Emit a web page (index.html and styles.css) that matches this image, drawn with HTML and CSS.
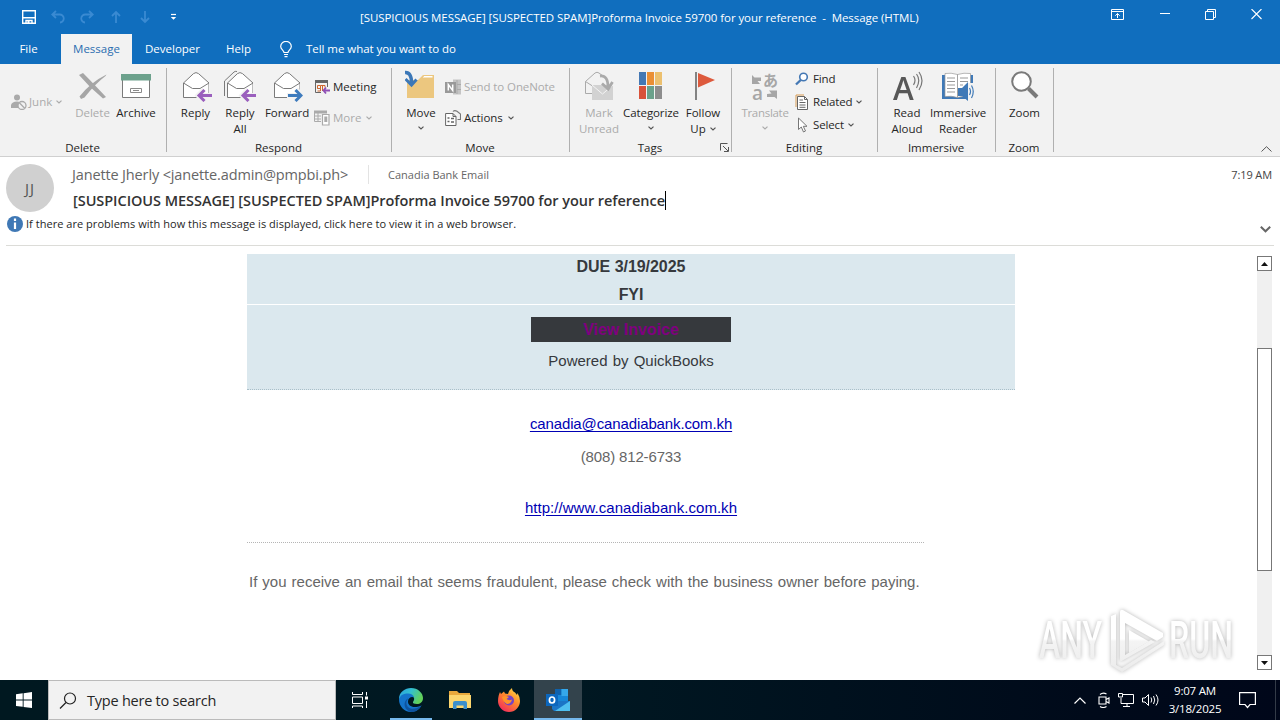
FILE: index.html
```html
<!DOCTYPE html>
<html lang="en">

<head>
  <meta charset="UTF-8">
  <meta name="viewport" content="width=device-width, initial-scale=1.0">
  <title>Message (HTML)</title>
  <link rel="stylesheet" href="styles.css">
</head>

<body>
  <svg class="defs" width="0" height="0">
    <symbol id="chev" viewBox="0 0 6 4"><path d="M.5.6 3 3 5.5.6" fill="none" stroke="currentColor" stroke-width="1.2"/></symbol>
    <symbol id="envelope" viewBox="0 0 26 27">
      <path d="M.5 11 L10.5 1.6 Q13 -.4 15.500 1.600 L26 11 V25.500 H.5z" fill="#fff" stroke="#7a7a7a"/>
      <path d="M.5 11 9.500 16.500 H17 L26 11" fill="none" stroke="#7a7a7a"/>
    </symbol>
  </svg>

  <!-- title bar -->
  <div class="titlebar">
    <div class="quick">
      <svg width="14" height="14" viewBox="0 0 14 14"><path d="M.7.700H13.300V13.300H.7zM1 7.800H13M4 13V10.500H10V13" fill="none" stroke="#fff" stroke-width="1.400"/><path d="M5.500 11h2v2h-2z" fill="#fff"/></svg>
      <svg class="faded" width="14" height="14" viewBox="0 0 14 14"><path d="M5 1 1.200 4.500 5 8M1.500 4.500H8.500A4 4 0 0 1 9 12.500" fill="none" stroke="currentColor" stroke-width="1.800"/></svg>
      <svg class="faded" width="14" height="14" viewBox="0 0 14 14"><path d="M9 1 12.800 4.500 9 8M12.500 4.500H5.500A4 4 0 0 0 5 12.500" fill="none" stroke="currentColor" stroke-width="1.800"/></svg>
      <svg class="faded" width="14" height="14" viewBox="0 0 14 14"><path d="M7 13V2M3 6 7 2 11 6" fill="none" stroke="currentColor" stroke-width="1.800"/></svg>
      <svg class="faded" width="14" height="14" viewBox="0 0 14 14"><path d="M7 1V12M3 8 7 12 11 8" fill="none" stroke="currentColor" stroke-width="1.800"/></svg>
      <svg width="14" height="14" viewBox="0 0 14 14"><path d="M4 4.500H9" stroke="#fff" stroke-width="1.200"/><path d="M3.800 7H9.200L6.500 9.700z" fill="#fff"/></svg>
    </div>
    <div class="window-title">[SUSPICIOUS MESSAGE] [SUSPECTED SPAM]Proforma Invoice 59700 for your reference&nbsp; -&nbsp; Message (HTML)</div>
    <div class="window-buttons">
      <svg width="14" height="12" viewBox="0 0 14 12"><path d="M.5.500H12.500V10.500H.5zM.5 2.500H12.500M6.500 9V4.500M4.300 6.700 6.500 4.500 8.700 6.700" fill="none" stroke="#fff"/></svg>
      <svg width="10" height="12" viewBox="0 0 10 12"><path d="M0 4.500H10" stroke="#fff"/></svg>
      <svg width="11" height="12" viewBox="0 0 11 12"><path d="M.5 2.500H8.500V10.500H.5zM2.500 2V.5H10.500V8.500H9" fill="none" stroke="#fff"/></svg>
      <svg width="11" height="12" viewBox="0 0 11 12"><path d="M.5 0 10.500 10M10.500 0 .5 10" stroke="#fff" stroke-width="1.100"/></svg>
    </div>
  </div>

  <div class="tabs">
    <div class="tab tab-file">File</div>
    <div class="tab active">Message</div>
    <div class="tab tab-dev">Developer</div>
    <div class="tab tab-help">Help</div>
    <svg class="bulb" width="12" height="17" viewBox="0 0 12 17"><path d="M4 11.500C4 9.500.7 8.500.7 5.500A5.200 5 0 0 1 11.300 5.500C11.300 8.500 8 9.500 8 11.500zM4 13.500H8M4.500 15.700H7.500" fill="none" stroke="#fff" stroke-width="1.200"/></svg>
    <div class="tell-me">Tell me what you want to do</div>
  </div>

  <!-- ribbon -->
  <div class="ribbon">
    <div class="group group-delete">
      <div class="tools">
        <div class="small-col one">
          <div class="small disabled">
            <svg width="16" height="16" viewBox="0 0 16 16"><circle cx="6" cy="3.500" r="3" fill="#aaa"/><path d="M0 14V11Q1 7.500 6 7.500 8 7.500 9 8.500L7 14z" fill="#aaa"/><circle cx="11" cy="11.500" r="4" fill="#f2f2f2" stroke="#aaa" stroke-width="1.300"/><path d="M8.300 8.800 13.700 14.200" stroke="#aaa" stroke-width="1.300"/></svg>
            <span>Junk</span><svg class="chev" width="6" height="4"><use href="#chev"/></svg>
          </div>
        </div>
        <div class="big disabled btn-delete">
          <svg width="30" height="32" viewBox="0 0 30 32"><path d="M1 5 5 3Q13 11 28 27L25 28.500Q12 18 1 5zM28.500 4.500 27.500 6Q17 14 6.500 27.500L3 29 1.500 26.500Q13 12 28.500 4.500z" fill="#a6a6a6"/></svg>
          <span>Delete</span>
        </div>
        <div class="big btn-archive">
          <svg width="30" height="32" viewBox="0 0 30 32"><path d="M1.500 9V27.500H28.500V9" fill="#fff" stroke="#7a7a7a"/><path d="M0 4H30V10.500H0z" fill="#6ca18c"/><path d="M9.500 18.500H20.500V22.500H9.500zM12 20.500H18" fill="none" stroke="#8a8a8a"/></svg>
          <span>Archive</span>
        </div>
      </div>
      <div class="group-name">Delete</div>
    </div>

    <div class="group group-respond">
      <div class="tools">
        <div class="big btn-reply">
          <svg width="32" height="32" viewBox="0 0 32 32"><use href="#envelope" x="3" y="2" width="26" height="27"/><path d="M32 25.500H18M24 19.500 18 25.500 24 31.500" fill="none" stroke="#f2f2f2" stroke-width="5"/><path d="M32 25.500H19M24.500 20 19 25.500 24.500 31" fill="none" stroke="#9a5fbd" stroke-width="3"/></svg>
          <span>Reply</span>
        </div>
        <div class="big btn-replyall">
          <svg width="34" height="32" viewBox="0 0 34 32"><path d="M1.500 26V11L11 2Q12 1 14 1.500" fill="none" stroke="#7a7a7a"/><use href="#envelope" x="4" y="2" width="26" height="27"/><path d="M34 25.500H19M25 19.500 19 25.500 25 31.500" fill="none" stroke="#f2f2f2" stroke-width="5"/><path d="M33 25.500H20M25.500 20 20 25.500 25.500 31" fill="none" stroke="#9a5fbd" stroke-width="3"/></svg>
          <span>Reply</span><span>All</span>
        </div>
        <div class="big btn-forward">
          <svg width="32" height="32" viewBox="0 0 32 32"><use href="#envelope" x="3" y="2" width="26" height="27"/><path d="M16 25.500H31M25 19.500 31 25.500 25 31.500" fill="none" stroke="#f2f2f2" stroke-width="5"/><path d="M17 25.500H30M24.500 20 30 25.500 24.500 31" fill="none" stroke="#3e7bbd" stroke-width="3"/></svg>
          <span>Forward</span>
        </div>
        <div class="small-col two">
          <div class="small">
            <svg width="16" height="16" viewBox="0 0 16 16"><path d="M1.500 2V13.500H7M13.500 4V8" fill="none" stroke="#666"/><path d="M1 1H14V4H1z" fill="#666"/><path d="M3.500 6.500H6.500V9.500H3.500zM3.500 9.500H6.500V12H3.500M6.500 6.500H11V8.500M8.500 6.500V12" fill="none" stroke="#d0672d"/><path d="M16 11.500H9.500M12 8.500 9.500 11.500 12 14.500" fill="none" stroke="#8f4fb5" stroke-width="1.800"/></svg>
            <span>Meeting</span>
          </div>
          <div class="small disabled">
            <svg width="16" height="16" viewBox="0 0 16 16"><path d="M.5 3V11.500H7M.5 6H7M.5 9H7M4 3V11" fill="none" stroke="#aaa"/><path d="M0 .500H13V3.500H0z" fill="#aaa"/><path d="M8.500 4.500H15V15H8.500z" fill="#fff" stroke="#aaa" stroke-width="1.200"/><path d="M10.300 6.500H13.300V12H10.300z" fill="#aaa"/></svg>
            <span>More</span><svg class="chev" width="6" height="4"><use href="#chev"/></svg>
          </div>
        </div>
      </div>
      <div class="group-name">Respond</div>
    </div>

    <div class="group group-move">
      <div class="tools">
        <div class="big btn-move">
          <svg width="32" height="32" viewBox="0 0 32 32"><path d="M2 28V10H13L18 5H29V28z" fill="#ecc77f"/><path d="M17 8 19 5.500H28V8z" fill="#fff" stroke="#ecc77f"/><path d="M0 2.500Q6.500 2 6.500 13" fill="none" stroke="#3c78b8" stroke-width="3.500"/><path d="M.5 9 6.500 15 11.500 9.500" fill="none" stroke="#3c78b8" stroke-width="3"/></svg>
          <span>Move</span><svg class="chev low" width="6" height="4"><use href="#chev"/></svg>
        </div>
        <div class="small-col two">
          <div class="small disabled">
            <svg width="16" height="16" viewBox="0 0 16 16"><path d="M8 .5H16V15.500H8z" fill="#c4c4c4"/><path d="M12 1V15M12 5.500H16M12 10.500H16" stroke="#aaa"/><path d="M0 3H11V14H0z" fill="#999"/><path d="M3.300 11.500V5.500L7.700 11.500V5.500" fill="none" stroke="#fff" stroke-width="1.500"/></svg>
            <span>Send to OneNote</span>
          </div>
          <div class="small">
            <svg width="16" height="16" viewBox="0 0 16 16"><path d="M.6 3.500H8L11 6.500V15.500H.6zM8 3.500V6.500H11" fill="#fff" stroke="#666"/><path d="M2.500 8H4.500M2.500 11.500H4.500M6 8.500H9M6 12H9" stroke="#666" stroke-width="1.300"/><path d="M8 1.500Q9.500-.2 12 1.200L15.500 4V9.500H12.500" fill="none" stroke="#777" stroke-width="1.100"/></svg>
            <span>Actions</span><svg class="chev" width="6" height="4"><use href="#chev"/></svg>
          </div>
        </div>
      </div>
      <div class="group-name">Move</div>
    </div>

    <div class="group group-tags">
      <div class="tools">
        <div class="big disabled btn-unread">
          <svg width="32" height="32" viewBox="0 0 32 32"><path d="M2.500 23.500V11.500L12 3Q14 1.500 16 3L20 6M2.500 11.500 9.500 16M2.500 23.500H9" fill="none" stroke="#aaa"/><path d="M9 15H30V30H9z" fill="#d2d2d2"/><path d="M9 15 19.500 24 30 15" fill="none" stroke="#f5f5f5"/><path d="M17 6Q25 5 25 17M19 13.500 25.200 19 29.500 12" fill="none" stroke="#aaa" stroke-width="2.800"/></svg>
          <span>Mark</span><span>Unread</span>
        </div>
        <div class="big btn-categorize">
          <svg class="cats" width="24" height="32" viewBox="0 0 24 32"><path d="M0 2H7V15H0z" fill="#4478b4"/><path d="M8 2H15V15H8z" fill="#ea8f35"/><path d="M16 2H23V15H16z" fill="#ecc06f"/><path d="M0 16H7V29H0z" fill="#d9523a"/><path d="M8 16H15V29H8z" fill="#6ba18b"/><path d="M16 16H23V29H16z" fill="#8d8d8d"/></svg>
          <span>Categorize</span><svg class="chev low" width="6" height="4"><use href="#chev"/></svg>
        </div>
        <div class="big btn-follow">
          <svg width="24" height="32" viewBox="0 0 24 32"><path d="M5 2V30" stroke="#777" stroke-width="1.800"/><path d="M7 3 24 10 7 17.500z" fill="#dd5a3d"/></svg>
          <span>Follow</span><span>Up <svg class="chev inline" width="6" height="4"><use href="#chev"/></svg></span>
        </div>
      </div>
      <div class="group-name">Tags</div>
      <svg class="launcher" width="9" height="9" viewBox="0 0 9 9"><path d="M.5 7.500V.5H7.500M3 3 8 8M8.500 4V8.500H4" fill="none" stroke="#555"/></svg>
    </div>

    <div class="group group-editing">
      <div class="tools">
        <div class="big disabled btn-translate">
          <div class="translate-icon">
            <svg width="28" height="32" viewBox="0 0 28 32"><path d="M1 5 3.500 7.500H10V11H6.500L9 14H1z" fill="#a6a6a6"/><path d="M26 29V20.500H18L20.500 23.500 16 24V27H23.500z" fill="#a6a6a6"/></svg>
            <b class="kana">あ</b><b class="latin">a</b>
          </div>
          <span>Translate</span><svg class="chev low" width="6" height="4"><use href="#chev"/></svg>
        </div>
        <div class="small-col three">
          <div class="small">
            <svg width="14" height="14" viewBox="0 0 14 14"><circle cx="8.500" cy="5" r="3.800" fill="#fff" stroke="#4478b4" stroke-width="1.600"/><path d="M5.700 8 1 12.500" stroke="#4478b4" stroke-width="2.400"/></svg>
            <span>Find</span>
          </div>
          <div class="small">
            <svg width="14" height="16" viewBox="0 0 14 16"><path d="M1 13V1H9" fill="none" stroke="#d89c54"/><path d="M2.500 2.500H9.500L12.500 5.500V15.500H2.500z" fill="#fff" stroke="#666"/><path d="M4.500 6H8M4.500 8.500H10.500M4.500 11H10.500M4.500 13.300H10.500M9.500 2.500V5.500H12.500" fill="none" stroke="#666"/></svg>
            <span>Related</span><svg class="chev" width="6" height="4"><use href="#chev"/></svg>
          </div>
          <div class="small">
            <svg width="14" height="16" viewBox="0 0 14 16"><path d="M3.500 1V12.500L6.300 10 8.500 15 10.500 14 8.300 9.300H12z" fill="#fff" stroke="#777"/></svg>
            <span>Select</span><svg class="chev" width="6" height="4"><use href="#chev"/></svg>
          </div>
        </div>
      </div>
      <div class="group-name">Editing</div>
    </div>

    <div class="group group-immersive">
      <div class="tools">
        <div class="big btn-read">
          <div class="read-icon">
            <b>A</b>
            <svg width="12" height="24" viewBox="0 0 12 24"><path d="M.5 6Q3.500 10 .5 15M3.500 4Q8 10 3.500 18M6 2Q12 10.500 6 20" fill="none" stroke="#777" stroke-width="1.200"/></svg>
          </div>
          <span>Read</span><span>Aloud</span>
        </div>
        <div class="big btn-immersive">
          <svg width="34" height="32" viewBox="0 0 34 32"><path d="M1 5H32V29H1z" fill="#3f79b7"/><path d="M4 3.500Q10 2.500 16.500 4.500V27.500Q10 25.500 4 26.500zM16.500 4.500Q23 2.500 29.500 3.500V26.500Q23 25.500 16.500 27.500z" fill="#fff" stroke="#999" stroke-width=".7"/><path d="M6 8H14M6 11.500H14M6 15H14M6 18.500H14M6 22H14M19 8H27M19 11.500H27M19 15H22" stroke="#999"/><path d="M27 13H34V31H27z" fill="#f2f2f2"/><path d="M17 18H21L27 12V31L21 26H17z" fill="#3f79b7"/><path d="M28.500 18Q30.500 21.500 28.500 25M30.500 15.500Q34 21.500 30.500 28" fill="none" stroke="#3f79b7" stroke-width="1.200"/></svg>
          <span>Immersive</span><span>Reader</span>
        </div>
      </div>
      <div class="group-name">Immersive</div>
    </div>

    <div class="group group-zoom">
      <div class="tools">
        <div class="big btn-zoom">
          <svg width="30" height="32" viewBox="0 0 30 32"><circle cx="11.500" cy="11.500" r="9.300" fill="#fff" stroke="#7a7a7a" stroke-width="2"/><path d="M18.500 18.500 27 27" stroke="#7a7a7a" stroke-width="4"/></svg>
          <span>Zoom</span>
        </div>
      </div>
      <div class="group-name">Zoom</div>
    </div>
    <svg class="collapse" width="11" height="6" viewBox="0 0 11 6"><path d="M.5 5.500 5.500.7 10.500 5.500" fill="none" stroke="#555"/></svg>
  </div>

  <!-- message header -->
  <div class="header">
    <div class="avatar">JJ</div>
    <div class="header-text">
      <div class="from-row">
        <span class="from">Janette Jherly &lt;janette.admin@pmpbi.ph&gt;</span>
        <span class="to">Canadia Bank Email</span>
        <span class="time">7:19 AM</span>
      </div>
      <div class="subject"><span>[SUSPICIOUS MESSAGE] [SUSPECTED SPAM]Proforma Invoice 59700 for your reference</span></div>
    </div>
  </div>
  <div class="infobar">
    <svg width="16" height="16" viewBox="0 0 16 16"><circle cx="8" cy="8" r="8" fill="#3f78b5"/><path d="M8 2.500V5M8 6.500V13" stroke="#fff" stroke-width="2.200"/></svg>
    <span class="info-text">If there are problems with how this message is displayed, click here to view it in a web browser.</span>
    <svg class="expand" width="11" height="7" viewBox="0 0 11 7"><path d="M.8.800 5.500 5.300 10.200.8" fill="none" stroke="#666" stroke-width="2"/></svg>
  </div>

  <!-- mail body -->
  <div class="content">
    <div class="mail">
      <div class="panel">
        <div class="due">DUE 3/19/2025</div>
        <div class="fyi">FYI</div>
        <div class="panel-bottom">
          <a class="invoice">View Invoice</a>
          <div class="powered">Powered by QuickBooks</div>
        </div>
      </div>
      <div class="line email"><a>canadia@canadiabank.com.kh</a></div>
      <div class="line phone">(808) 812-6733</div>
      <div class="line site"><a>http://www.canadiabank.com.kh</a></div>
      <div class="notice"><span>If you receive an email that seems fraudulent, please check with the business owner before paying.</span></div>
    </div>
    <div class="scrollbar">
      <div class="arrow"><svg width="7" height="4" viewBox="0 0 7 4"><path d="M0 4 3.500 0 7 4z" fill="#111"/></svg></div>
      <div class="thumb"></div>
      <div class="arrow down"><svg width="7" height="4" viewBox="0 0 7 4"><path d="M0 0H7L3.500 4z" fill="#111"/></svg></div>
    </div>
    <svg class="watermark" width="210" height="80" viewBox="0 0 210 80">
      <defs><linearGradient id="wm" gradientUnits="userSpaceOnUse" x1="0" y1="8" x2="0" y2="68"><stop offset=".48" stop-color="#fff"/><stop offset=".52" stop-color="#f4f4f4"/><stop offset="1" stop-color="#ececec"/></linearGradient></defs>
      <g class="mark" fill="url(#wm)">
        <text x="9" y="56" textLength="63" lengthAdjust="spacingAndGlyphs">ANY</text>
        <text x="139" y="56" textLength="64" lengthAdjust="spacingAndGlyphs">RUN</text>
        <path d="M90 10Q90 7 93 8L133 31V35L127 39 95 21V53L121 38 125 40 90 60zM81 14 86 12V63L92 66 134 39V43L92 70 81 63z"/>
        <path d="M99 28 119 39.500 99 51z"/>
      </g>
    </svg>
  </div>

  <!-- taskbar -->
  <div class="taskbar">
    <div class="start"><svg width="16" height="16" viewBox="0 0 16 16"><path d="M0 2.200 6.700 1.300V7.600H0zM7.600 1.200 16 0V7.600H7.600zM0 8.500H6.700V14.800L0 13.900zM7.600 8.500H16V16L7.600 14.900z" fill="#fff"/></svg></div>
    <div class="search">
      <svg width="18" height="17" viewBox="0 0 18 17"><circle cx="11" cy="6.500" r="5.500" fill="none" stroke="#222" stroke-width="1.200"/><path d="M7 10.500 1 16.500" stroke="#222" stroke-width="1.300"/></svg>
      <span>Type here to search</span>
    </div>
    <div class="task"><svg width="16" height="16" viewBox="0 0 16 16"><path d="M.5 0V2.500H10.500V0M.5 5H10.500V11.500H.5zM.5 16V14H10.500V16M14.500 0V3.500M14.500 9V16" fill="none" stroke="#fff"/><path d="M13 4.500H16V7.500H13z" fill="#fff"/></svg></div>
    <div class="task edge">
      <svg width="24" height="24" viewBox="0 0 24 24">
        <defs><linearGradient id="eg" x1="0" y1="0" x2="1" y2=".4"><stop offset="0" stop-color="#2a9fe0"/><stop offset=".5" stop-color="#33bfd0"/><stop offset="1" stop-color="#62d05a"/></linearGradient></defs>
        <path d="M0 11C0 4 6 0 12 0 19 0 24 5 24 10 24 14 21 16 18 16 15 16 13.500 15 14 14Q16 11 14.500 9L9 7z" fill="url(#eg)"/>
        <path d="M0 11.500C1 7 5 5.500 9 5.500 12 5.500 14.500 7 15 9.500 13 8 9 9.500 9 13.500 9 18 14 21 22.500 17.500 20 22 16 24 12 24 5 24 0 18 0 11.500z" fill="#1474cb"/>
        <path d="M9.500 10.500C6 13 7 19 11.500 20.500 15 21.500 19 20 22.500 17.500 20 22 16 24 12.500 24 7 23 4.500 18 6 14 7 11.500 8 10.700 9.500 10.500z" fill="#0e539f"/>
      </svg>
    </div>
    <div class="task"><svg width="22" height="18" viewBox="0 0 22 18"><path d="M0 0H8L10 2H21V17H0z" fill="#e9a93c"/><path d="M0 4H22V17H0z" fill="#fcd66e"/><path d="M4 18V12Q4 10 6 10H16Q18 10 18 12V18H14.500V14.500H7.500V18z" fill="#3b8fcb"/></svg></div>
    <div class="task"><svg width="24" height="24" viewBox="0 0 24 24">
      <defs><linearGradient id="fx" x1=".9" y1="0" x2=".2" y2="1"><stop offset="0" stop-color="#ffe14a"/><stop offset=".45" stop-color="#ff8a2b"/><stop offset="1" stop-color="#f1275f"/></linearGradient></defs>
      <path d="M1 13C1 9 2 6 3 4L4 6 7 3.500 8 5.500 11 6Q12 2 15 0 15 3 18 4.500L20 7 20.500 5Q23 9 23 13A11 11 0 0 1 1 13z" fill="url(#fx)"/><circle cx="12" cy="12.500" r="5" fill="#7542c5"/><path d="M5 9Q8 7 12 9L9.500 11Q12 13 15 11.500 14 16 10 16 6 14 5 9z" fill="#ff9428"/></svg></div>
    <div class="task current"><svg width="24" height="22" viewBox="0 0 24 22"><path d="M9 0H22V13H9z" fill="#1687d8"/><path d="M9 0H15.500V6H9z" fill="#0f62ad"/><path d="M15.500 0H22V7H15.500z" fill="#35a8ea"/><path d="M6 12H24V22H8L6 20z" fill="#1a75c6"/><path d="M24 12V22H9z" fill="#4fc0f0"/><path d="M0 5H12V17H0z" fill="#0c67bd"/><ellipse cx="6" cy="11" rx="2.600" ry="3" fill="none" stroke="#fff" stroke-width="1.700"/></svg></div>
    <div class="tray">
      <svg class="caret" width="12" height="7" viewBox="0 0 12 7"><path d="M.5 6.500 6 1 11.500 6.500" fill="none" stroke="#fff" stroke-width="1.200"/></svg>
      <svg width="12" height="16" viewBox="0 0 12 16"><path d="M1 5H8V12H1zM8 7.500 11 6V11L8 9.500M2 2.500Q5 0 8.500 2M2 14.500Q5 16.500 8.500 14.500" fill="none" stroke="#fff" stroke-width="1.100"/></svg>
      <svg width="16" height="14" viewBox="0 0 16 14"><path d="M5 1.500H15.500V10.500H3V5M9 11V13M5 13.500H12" fill="none" stroke="#fff"/><path d="M.5.500H4.500V4H.5z" fill="#000d1a" stroke="#fff"/></svg>
      <svg width="17" height="14" viewBox="0 0 17 14"><path d="M.5 5H3L6.500 1.500V12.500L3 9H.5z" fill="none" stroke="#fff"/><path d="M9 4.500Q10.500 7 9 9.500M11.500 3Q14 7 11.500 11M14 1.500Q18 7 14 12.500" fill="none" stroke="#fff"/></svg>
      <div class="clock"><span class="hour">9:07 AM</span><span class="date">3/18/2025</span></div>
      <svg width="17" height="17" viewBox="0 0 17 17"><path d="M.6.600H16.400V12.500H11L8.500 15.500 6 12.500H.6z" fill="none" stroke="#fff" stroke-width="1.200"/></svg>
    </div>
  </div>
</body>

</html>
```
FILE: styles.css
```css
* {
  box-sizing: border-box;
}

body {
  margin: 0;
  width: 1280px;
  height: 720px;
  overflow: hidden;
  display: flex;
  flex-direction: column;
  font-family: "Open Sans", "Noto Sans", sans-serif;
  font-size: 11.5px;
  color: #262626;
  background-color: #fff;
}

svg {
  display: block;
  flex-shrink: 0;
}

.defs {
  position: absolute;
}

/* title bar */
.titlebar {
  height: 34px;
  display: flex;
  align-items: center;
  justify-content: space-between;
  background-color: #106ebe;
  color: #fff;
}

.quick {
  width: 360px;
  display: flex;
  gap: 15px;
  padding-left: 22px;
}

.faded {
  color: #3a8ad2;
}

.window-title {
  flex: 1;
  font-size: 11.5px;
  letter-spacing: -0.075px;
  white-space: nowrap;
}

.window-buttons {
  display: flex;
  width: 168px;
  padding-bottom: 4px;
}

.window-buttons svg {
  margin-right: 35px;
  margin-left: -1px;
}

.window-buttons svg + svg {
  margin-left: 0;
}

/* tabs */
.tabs {
  height: 30px;
  display: flex;
  align-items: stretch;
  background-color: #106ebe;
  color: #fff;
  line-height: 29px;
}

.tab {
  text-align: center;
}

.tab-file {
  width: 57px;
  margin-right: 4px;
}

.active {
  width: 71px;
  background-color: #f2f2f2;
  color: #2a6db0;
}

.tab-dev {
  width: 81px;
}

.tab-help {
  width: 51px;
}

.bulb {
  margin: 7px 13px 0 16px;
}

.tell-me {
  padding-left: 1px;
  letter-spacing: -0.05px;
}

/* ribbon */
.ribbon {
  position: relative;
  height: 93px;
  display: flex;
  background-color: #f2f2f2;
  border-bottom: 1px solid #d0d0d0;
}

.group {
  position: relative;
  height: 92px;
}

.group::after {
  content: "";
  position: absolute;
  right: 0;
  top: 4px;
  height: 84px;
  border-right: 1px solid #b0b0b0;
}

.group-delete {
  width: 167px;
}

.group-respond {
  width: 225px;
}

.group-move {
  width: 178px;
}

.group-tags {
  width: 162px;
}

.group-editing {
  width: 146px;
}

.group-immersive {
  width: 118px;
}

.group-zoom {
  width: 58px;
}

.tools {
  display: flex;
  height: 76px;
  padding-top: 6px;
}

.group-name {
  padding-right: 2px;
  text-align: center;
  line-height: 16px;
}

.big {
  display: flex;
  flex-direction: column;
  align-items: center;
  white-space: nowrap;
}

.big span {
  line-height: 16px;
}

.big > svg:first-child {
  margin-bottom: 3px;
}

.chev {
  color: #555;
}

.low {
  margin-top: 5px;
}

.inline {
  display: inline-block;
  vertical-align: 2px;
  margin-left: 1px;
}

.disabled,
.disabled .chev {
  color: #ababab;
}

.btn-delete {
  width: 41px;
}

.btn-archive {
  width: 46px;
}

.btn-reply {
  width: 43px;
  margin-left: 7px;
}

.btn-replyall {
  width: 46px;
}

.btn-forward {
  width: 48px;
  margin-right: 2px;
  letter-spacing: -0.05px;
}

.btn-move {
  width: 46px;
  margin-left: 6px;
}

.btn-unread {
  width: 46px;
  margin-left: 6px;
}

.btn-categorize {
  width: 58px;
  letter-spacing: -0.1px;
}

.btn-follow {
  width: 46px;
}

.btn-translate {
  width: 50px;
  margin-left: 8px;
  letter-spacing: -0.3px;
}

.translate-icon {
  position: relative;
  height: 32px;
  margin-bottom: 3px;
  color: #a6a6a6;
}

.kana,
.latin {
  position: absolute;
  line-height: 16px;
  letter-spacing: 0;
}

.kana {
  left: 12px;
  top: 2px;
  font-family: "Noto Sans CJK JP", sans-serif;
  font-size: 15px;
}

.latin {
  left: 1px;
  top: 15px;
  font-size: 19px;
  font-weight: 600;
}

.btn-read {
  width: 38px;
  margin-left: 10px;
}

.read-icon {
  display: flex;
  width: 32px;
  height: 32px;
  margin-bottom: 3px;
  padding-left: 2px;
  color: #585858;
}

.read-icon b {
  width: 20px;
  font-size: 33px;
  font-weight: 600;
  line-height: 36px;
  height: 32px;
  transform: scaleX(0.95);
  transform-origin: left;
}

.btn-immersive {
  width: 64px;
}

.btn-zoom {
  width: 57px;
}

.small-col {
  display: flex;
  flex-direction: column;
}

.one {
  width: 72px;
  padding: 20px 0 0 11px;
}

.two {
  padding-left: 1px;
  padding-top: 1px;
}

.three {
  padding-left: 5px;
  margin-top: -3px;
}

.small {
  display: flex;
  align-items: center;
  gap: 3px;
  height: 23px;
  white-space: nowrap;
}

.one .small {
  gap: 2px;
}

.two .small {
  height: 31px;
}

.group-move .small {
  letter-spacing: -0.1px;
}

.three .small {
  gap: 4px;
  letter-spacing: -0.15px;
}

.small .chev {
  margin-left: 2px;
}

.three .small .chev {
  margin-left: 0;
}

.launcher {
  position: absolute;
  right: 3px;
  bottom: 4px;
}

.collapse {
  position: absolute;
  right: 8px;
  bottom: 4px;
}

/* message header */
.header {
  display: flex;
  height: 57px;
  padding: 7px 8px 0 6px;
}

.avatar {
  width: 48px;
  height: 48px;
  border-radius: 50%;
  background-color: #d0d0d0;
  color: #555;
  font-size: 15px;
  line-height: 48px;
  text-align: center;
  letter-spacing: 1px;
}

.header-text {
  flex: 1;
  padding-left: 18px;
}

.from-row {
  display: flex;
  align-items: center;
  height: 21px;
}

.from {
  width: 297px;
  font-size: 14.5px;
  letter-spacing: -0.14px;
  color: #666;
  border-right: 1px solid #e3e3e3;
  white-space: nowrap;
}

.to {
  flex: 1;
  padding-left: 19px;
  font-size: 11px;
  color: #666;
}

.time {
  font-size: 11px;
  letter-spacing: -0.1px;
  color: #444;
}

.subject {
  display: flex;
  height: 30px;
  align-items: center;
  padding-left: 1px;
  font-size: 14.5px;
  font-weight: 600;
  letter-spacing: -0.055px;
  color: #333;
}

.subject span {
  line-height: 19px;
  white-space: nowrap;
  border-right: 1px solid #000;
}

.infobar {
  display: flex;
  height: 32px;
  margin: 0 6px;
  padding: 2px 3px 0 1px;
  border-bottom: 1px solid #dcdcd8;
}

.info-text {
  flex: 1;
  padding-left: 3px;
  font-size: 11px;
  line-height: 16px;
  letter-spacing: 0.035px;
}

.expand {
  margin-top: 10px;
}

/* mail body */
.content {
  position: relative;
  flex: 1;
  display: flex;
  justify-content: space-between;
  font-family: "Liberation Sans", Arial, sans-serif;
  font-size: 15px;
}

.mail {
  width: 768px;
  margin: 8px 0 0 247px;
  text-align: center;
}

.panel {
  height: 136px;
  background-color: #dbe8ee;
  border-bottom: 1px dotted #a9bfc9;
  color: #36393d;
}

.due,
.fyi {
  font-size: 16px;
  font-weight: bold;
  height: 25px;
  line-height: 26px;
  letter-spacing: -0.05px;
}

.fyi {
  line-height: 31px;
}

.panel-bottom {
  padding-top: 12px;
  border-top: 1px solid #fff;
}

.invoice {
  display: block;
  width: 200px;
  height: 25px;
  margin: 0 auto 9px;
  background-color: #36393d;
  color: #800080;
  font-size: 16px;
  font-weight: bold;
  line-height: 26px;
}

.powered {
  line-height: 20px;
  word-spacing: 1px;
}

.line {
  line-height: 20px;
  color: #666;
}

.line a {
  color: #0000b4;
  text-decoration: underline;
  text-underline-offset: 2px;
}

.email {
  margin-top: 24px;
  letter-spacing: -0.12px;
}

.phone {
  margin-top: 13px;
  letter-spacing: -0.15px;
}

.site {
  margin-top: 31px;
  letter-spacing: 0.04px;
}

.notice {
  width: 677px;
  margin-top: 24px;
  padding-top: 29px;
  border-top: 1px dotted #b5b5b5;
  color: #666;
  line-height: 20px;
  text-align: left;
  padding-left: 2px;
  white-space: nowrap;
  word-spacing: 0.85px;
}

.scrollbar {
  width: 15px;
  height: 414px;
  margin: 10px 8px 0 0;
  background-color: #f0f0f0;
  display: flex;
  flex-direction: column;
}

.arrow {
  width: 15px;
  height: 15px;
  border: 1px solid #777;
  background-color: #fff;
  display: flex;
  align-items: center;
  justify-content: center;
}

.thumb {
  height: 223px;
  margin-top: 77px;
  border: 1px solid #777;
  background-color: #fff;
}

.down {
  margin-top: auto;
}

.watermark {
  position: absolute;
  left: 1030px;
  top: 356px;
}

.mark {
  font-family: Roboto, sans-serif;
  font-size: 51px;
  font-weight: 500;
  filter: drop-shadow(0 0 2px #b4b4b4);
}

/* taskbar */
.taskbar {
  height: 40px;
  display: flex;
  background: linear-gradient(to right, #001820 0%, #001822 45%, #000a1a 85%, #00071a 100%);
}

.start {
  width: 48px;
  display: flex;
  align-items: center;
  justify-content: center;
}

.search {
  width: 288px;
  display: flex;
  align-items: center;
  gap: 10px;
  padding-left: 10px;
  background-color: #f2f2f2;
  border: 1px solid #bbb;
  font-size: 14.5px;
  letter-spacing: -0.23px;
}

.task {
  width: 48px;
  margin-right: 1px;
  display: flex;
  align-items: center;
  justify-content: center;
}

.edge {
  margin-left: 1px;
  width: 49px;
}

.edge,
.current {
  border-bottom: 2px solid #76b9ed;
  padding-top: 2px;
}

.edge {
  border-image: linear-gradient(to right, transparent 5px, #76b9ed 5px, #76b9ed 45px, transparent 45px) 1;
}

.current {
  background-color: #33434c;
}

.tray {
  flex: 1;
  display: flex;
  justify-content: flex-end;
  align-items: center;
  gap: 8px;
  padding-right: 19px;
  border-right: 1px solid #333b48;
  margin-right: 4px;
  color: #fff;
}

.caret {
  margin-right: 4px;
}

.clock {
  display: flex;
  flex-direction: column;
  align-items: center;
  width: 56px;
  margin-right: 8px;
  line-height: 18px;
  letter-spacing: -0.2px;
  white-space: nowrap;
}
```
